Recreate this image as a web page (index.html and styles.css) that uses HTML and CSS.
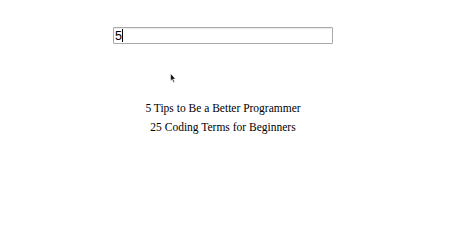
FILE: index.html
```html
<!DOCTYPE html>
<html>
<head>
<meta charset="utf-8">
<link rel="stylesheet" href="styles.css">
</head>
<body>
<div class="app">
  <span class="field">
    <input class="search" type="text" value="5">
    <span class="caret"></span>
  </span>
  <ul class="results">
    <li>5 Tips to Be a Better Programmer</li>
    <li>25 Coding Terms for Beginners</li>
  </ul>
</div>
<svg class="cursor" width="6" height="10" viewBox="0 0 6 10"><path d="M0.5 0.5 L0.5 8 L2.2 6.4 L3.4 9.4 L4.6 8.9 L3.4 6 L5.6 6 Z" fill="#111" stroke="#fff" stroke-width="0.6"/></svg>
</body>
</html>
```
FILE: styles.css
```css
html, body {
  margin: 0;
  padding: 0;
  background: #fff;
}
.app {
  width: 446px;
  padding-top: 27px;
  display: flex;
  flex-direction: column;
  align-items: center;
  font-family: "Liberation Serif", "Times New Roman", serif;
}
.field {
  position: relative;
  display: block;
  height: 17px;
}
.search {
  box-sizing: border-box;
  display: block;
  width: 220px;
  height: 17px;
  margin: 0;
  padding: 0 1px;
  border: 1px solid #a9a9a9;
  border-radius: 1px;
  box-shadow: inset 0 1px 1px rgba(0,0,0,0.08);
  font-family: "Liberation Sans", Arial, sans-serif;
  font-size: 12.5px;
  color: #000;
  outline: none;
}
.caret {
  position: absolute;
  left: 9px;
  top: 2px;
  width: 1px;
  height: 13px;
  background: #000;
}
.results {
  list-style: none;
  margin: 55px 0 0;
  padding: 0;
  text-align: center;
  font-size: 11.5px;
  line-height: 19px;
  color: #000;
}
.cursor {
  position: absolute;
  left: 170px;
  top: 73px;
}
```
